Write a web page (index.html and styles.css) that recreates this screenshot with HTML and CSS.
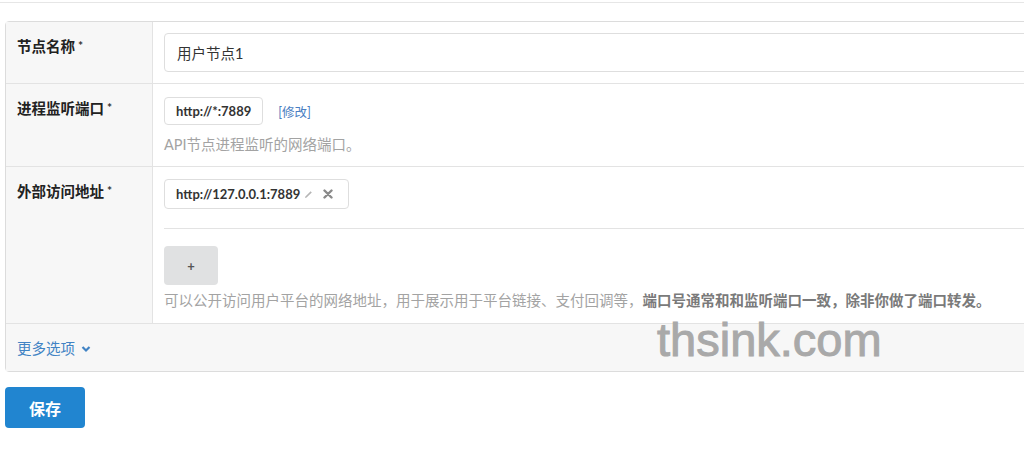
FILE: index.html
```html
<!DOCTYPE html>
<html lang="zh-CN">
<head>
    <meta charset="UTF-8">
    <title>节点设置</title>
    <link rel="stylesheet" href="styles.css">
</head>
<body>
    <!-- Верхняя полоса -->
    <div class="top-line"></div>

    <div class="page">
        <table class="form-table">
            <tr>
                <td class="title">节点名称<span class="req">*</span></td>
                <td class="value">
                    <input type="text" class="text-input" value="用户节点1">
                </td>
            </tr>
            <tr>
                <td class="title">进程监听端口<span class="req">*</span></td>
                <td class="value">
                    <div class="port-line">
                        <span class="port-box">http://*:7889</span>
                        <a href="#" class="edit-link">[修改]</a>
                    </div>
                    <p class="comment">API节点进程监听的网络端口。</p>
                </td>
            </tr>
            <tr>
                <td class="title">外部访问地址<span class="req">*</span></td>
                <td class="value addr-cell">
                    <div class="addr-tag">
                        <span class="addr-text">http://127.0.0.1:7889</span>
                        <svg class="icon-pencil" width="9" height="9" viewBox="0 0 9 9">
                            <path d="M1 8 L1.4 6.4 L6.6 1.2 L7.8 2.4 L2.6 7.6 Z" fill="#b5b5b5"/>
                        </svg>
                        <svg class="icon-remove" width="10" height="10" viewBox="0 0 10 10">
                            <path d="M1.5 1.5 L8.5 8.5 M8.5 1.5 L1.5 8.5" stroke="#8a8a8a" stroke-width="2.4" stroke-linecap="round"/>
                        </svg>
                    </div>
                    <div class="divider"></div>
                    <button class="add-button">+</button>
                    <p class="comment">可以公开访问用户平台的网络地址，用于展示用于平台链接、支付回调等，<strong>端口号通常和和监听端口一致，除非你做了端口转发。</strong></p>
                </td>
            </tr>
            <tr class="more-row">
                <td colspan="2">
                    <a href="#" class="more-link">更多选项
                        <svg width="10" height="10" viewBox="0 0 10 10">
                            <path d="M1.5 3 L5 6.5 L8.5 3" stroke="#4183c4" stroke-width="2.2" fill="none"/>
                        </svg>
                    </a>
                </td>
            </tr>
        </table>

        <button class="save-button">保存</button>
    </div>

    <!-- Водяной знак -->
    <div class="watermark">thsink.com</div>
</body>
</html>
```

FILE: styles.css
```css
/* Общие стили */
body {
    margin: 0;
    font-family: Lato, "Noto Sans CJK SC", sans-serif;
    font-size: 14px;
    color: #333333;
    background-color: #ffffff;
    overflow: hidden;
    position: relative;
    width: 1024px;
    height: 453px;
}
.top-line {
    height: 2px;
    border-bottom: 1px solid #e6e6e6;
}
.page {
    padding: 18px 0 0 5px;
}
/* Таблица формы */
.form-table {
    width: 1080px;
    border-collapse: separate;
    border-spacing: 0;
    border: 1px solid #dcdcdc;
    border-radius: 4px;
}
.form-table td {
    border-top: 1px solid #e3e3e3;
    vertical-align: top;
}
.form-table tr:first-child td {
    border-top: none;
}
.title {
    width: 135px;
    padding: 14px 0 0 11px;
    background-color: #f7f7f7;
    font-size: 14.5px;
    font-weight: bold;
    line-height: 20px;
    color: #222222;
}
.req {
    font-size: 12px;
    margin-left: 3px;
    vertical-align: 2px;
    color: #333333;
}
.value {
    border-left: 1px solid #e3e3e3;
    padding: 11px 11px 11px 11px;
}
.addr-cell {
    padding-bottom: 12px;
}
.text-input {
    display: block;
    width: 100%;
    height: 39px;
    box-sizing: border-box;
    padding: 0 12px;
    border: 1px solid #dedede;
    border-radius: 4px;
    font-family: Lato, "Noto Sans CJK SC", sans-serif;
    font-size: 14.5px;
    color: #333333;
    outline: none;
}
/* Порт */
.port-line {
    display: flex;
    align-items: center;
    margin-top: 2px;
}
.port-box {
    display: inline-block;
    height: 28px;
    line-height: 26px;
    box-sizing: border-box;
    padding: 0 11px;
    border: 1px solid #dedede;
    border-radius: 4px;
    font-size: 13px;
    font-weight: bold;
    color: #333333;
}
.edit-link {
    margin-left: 15px;
    font-size: 12.5px;
    color: #4a7ec2;
    text-decoration: none;
}
.comment {
    margin: 10px 0 0 0;
    font-size: 14.5px;
    line-height: 20px;
    color: #a3a3a3;
}
.comment strong {
    color: #7a7a7a;
}
/* Адрес */
.addr-tag {
    display: inline-flex;
    align-items: center;
    margin-top: 1px;
    height: 30px;
    box-sizing: border-box;
    padding: 0 15px 0 11px;
    border: 1px solid #dedede;
    border-radius: 4px;
}
.addr-text {
    font-size: 13px;
    font-weight: bold;
    color: #333333;
}
.icon-pencil {
    margin-left: 4px;
}
.icon-remove {
    margin-left: 10px;
}
.divider {
    margin-top: 19px;
    border-top: 1px solid #e3e3e3;
}
.add-button {
    display: block;
    margin-top: 17px;
    width: 54px;
    height: 39px;
    border: none;
    border-radius: 4px;
    background-color: #e0e1e2;
    color: #555555;
    font-family: Lato, sans-serif;
    font-size: 13px;
    font-weight: bold;
}
.add-button + .comment {
    margin-top: 6px;
}
/* Больше опций */
.more-row td {
    height: 47px;
    padding: 0 0 0 11px;
    background-color: #f7f7f7;
    vertical-align: middle;
}
.more-link {
    font-size: 14.5px;
    color: #4183c4;
    text-decoration: none;
}
.more-link svg {
    margin-left: 2px;
}
/* Кнопка сохранения */
.save-button {
    margin-top: 15px;
    width: 80px;
    height: 41px;
    border: none;
    border-radius: 4px;
    background-color: #2185d0;
    color: #ffffff;
    font-family: Lato, "Noto Sans CJK SC", sans-serif;
    font-size: 16px;
    font-weight: bold;
}
/* Водяной знак */
.watermark {
    position: absolute;
    left: 657px;
    top: 316px;
    font-family: "Liberation Sans", Arial, sans-serif;
    font-size: 47px;
    line-height: 1;
    color: #a9a9a9;
    -webkit-text-stroke: 1px #a9a9a9;
}
```
